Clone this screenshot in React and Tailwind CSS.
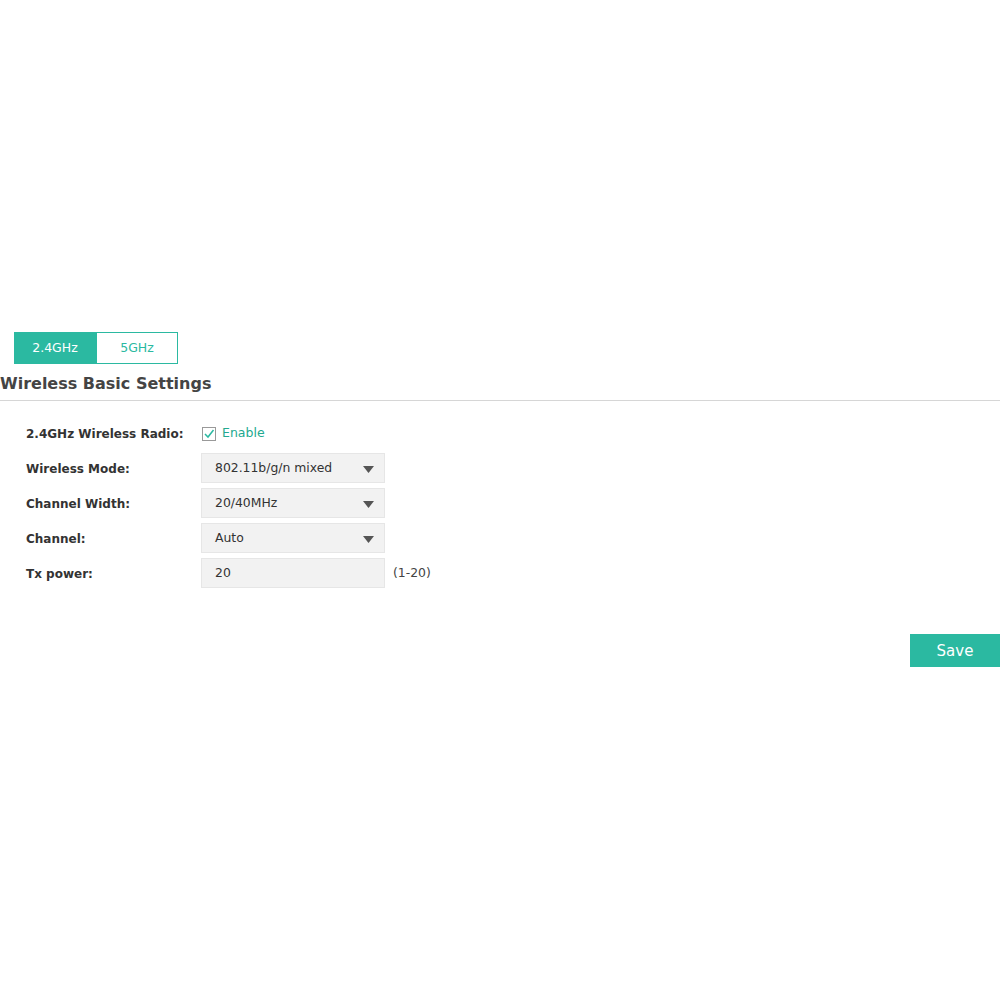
import React from "react";

const font = { fontFamily: '"DejaVu Sans", Verdana, sans-serif' };

function Caret() {
  return (
    <svg width="11" height="7" viewBox="0 0 11 7" className="absolute right-[10px] top-[12px]">
      <path d="M0 0 L11 0 L5.5 7 Z" fill="#555" />
    </svg>
  );
}

function Row({ label, children }) {
  return (
    <div className="flex items-center h-[30px]">
      <div className="w-[175px] text-[12px] font-bold text-[#333] pt-[1px]">{label}</div>
      {children}
    </div>
  );
}

function Select({ value }) {
  return (
    <div className="relative w-[184px] h-[30px] bg-[#f2f2f2] border border-[#e6e6e6] flex items-center pl-[13px] text-[12.4px] text-[#333]">
      {value}
      <Caret />
    </div>
  );
}

export default function App() {
  return (
    <div className="w-[1000px] h-[1000px] bg-white pt-[332px]" style={font}>
      <div className="flex pl-[14px]">
        <div className="w-[82px] h-[32px] bg-[#2bb9a1] text-white text-[12.5px] flex items-center justify-center pt-[1px]">2.4GHz</div>
        <div className="w-[82px] h-[32px] border border-[#2bb9a1] text-[#2bb9a1] text-[12.5px] flex items-center justify-center pt-[1px]">5GHz</div>
      </div>
      <div className="h-[37px] border-b border-[#d6d6d6] flex items-center text-[16px] font-bold text-[#444] pt-[4px]">
        Wireless Basic Settings
      </div>
      <div className="pl-[26px] pt-[17px] flex flex-col gap-[5px]">
        <Row label="2.4GHz Wireless Radio:">
          <div className="flex items-center gap-[6px] text-[12.5px] text-[#22a98f] ml-[1px] pt-[1px]">
            <svg width="14" height="14" viewBox="0 0 14 14">
              <rect x="0.5" y="0.5" width="13" height="13" fill="white" stroke="#999" />
              <path d="M3 7 L6 10 L11.5 3" fill="none" stroke="#2bb9a1" strokeWidth="1.5" />
            </svg>
            Enable
          </div>
        </Row>
        <Row label="Wireless Mode:"><Select value="802.11b/g/n mixed" /></Row>
        <Row label="Channel Width:"><Select value="20/40MHz" /></Row>
        <Row label="Channel:"><Select value="Auto" /></Row>
        <Row label="Tx power:">
          <div className="w-[184px] h-[30px] bg-[#f2f2f2] border border-[#e6e6e6] flex items-center pl-[13px] text-[12.4px] text-[#333]">20</div>
          <span className="ml-[8px] text-[12.4px] text-[#444]">(1-20)</span>
        </Row>
      </div>
      <div className="flex justify-end mt-[46px]">
        <div className="w-[90px] h-[33px] bg-[#2bb9a1] text-white text-[15px] flex items-center justify-center pt-[2px]">Save</div>
      </div>
    </div>
  );
}
